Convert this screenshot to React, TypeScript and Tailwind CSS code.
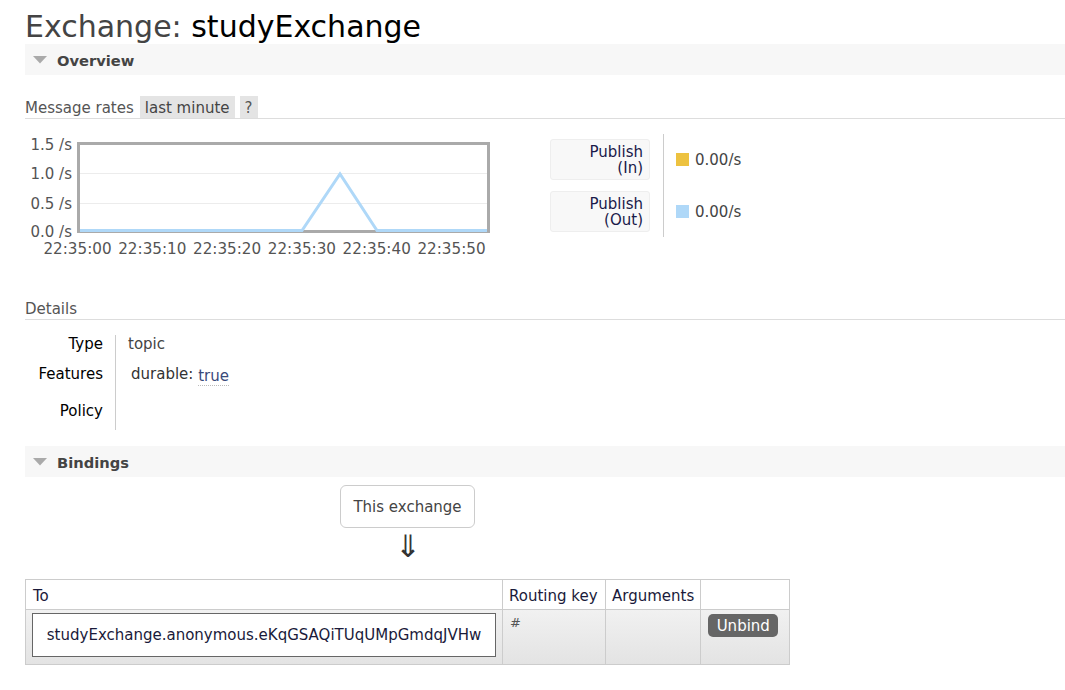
import React from "react";

const font = { fontFamily: '"DejaVu Sans", Verdana, sans-serif' };

function Tri() {
  return (
    <svg width="14" height="8" viewBox="0 0 14 8" className="shrink-0">
      <polygon points="0,0 14,0 7,7.5" fill="#aaaaaa" />
    </svg>
  );
}

function SectionBar({ title }: { title: string }) {
  return (
    <div className="h-[31px] bg-[#f7f7f7] flex items-center pl-[8px] gap-[10px]">
      <Tri />
      <span className="font-bold text-[#444] leading-[17px] text-[14.7px] pt-[2px]">{title}</span>
    </div>
  );
}

function Chart() {
  const yLabels = [
    { t: "1.5 /s", y: 14 },
    { t: "1.0 /s", y: 43 },
    { t: "0.5 /s", y: 73 },
    { t: "0.0 /s", y: 101 },
  ];
  const xLabels = ["22:35:00", "22:35:10", "22:35:20", "22:35:30", "22:35:40", "22:35:50"];
  return (
    <svg width="470" height="132" viewBox="0 0 470 132" className="shrink-0" style={font}>
      <rect x="53.5" y="13.5" width="410" height="88" fill="#ffffff" />
      <line x1="54" y1="43.5" x2="463" y2="43.5" stroke="#ececec" strokeWidth="1" />
      <line x1="54" y1="73.5" x2="463" y2="73.5" stroke="#ececec" strokeWidth="1" />
      <rect x="53.5" y="13.5" width="410" height="88" fill="none" stroke="#aaaaaa" strokeWidth="3" />
      <polyline
        points="55,100.5 277,100.5 315,44 352,100.5 462,100.5"
        fill="none"
        stroke="#afd8f8"
        strokeWidth="3"
        strokeLinejoin="miter"
      />
      {yLabels.map((l) => (
        <text key={l.t} x="47" y={l.y + 5.5} textAnchor="end" fontSize="15" fill="#545454">
          {l.t}
        </text>
      ))}
      {xLabels.map((t, i) => (
        <text key={t} x={52.5 + i * 74.8} y="123.5" textAnchor="middle" fontSize="15.2" fill="#545454">
          {t}
        </text>
      ))}
    </svg>
  );
}

function LegendBox({ a, b }: { a: string; b: string }) {
  return (
    <div className="h-[41px] w-[100px] bg-[#f8f8f8] border border-[#eeeeee] rounded-[3px] flex flex-col items-end justify-center pr-[6px] pt-[1px] text-[#1a1a4a] leading-[16px]">
      <span className="whitespace-nowrap">{a}</span>
      <span className="whitespace-nowrap">{b}</span>
    </div>
  );
}

function LegendValue({ color }: { color: string }) {
  return (
    <div className="h-[41px] flex items-center gap-[6px]">
      <span className="w-[13px] h-[13px] inline-block" style={{ backgroundColor: color }} />
      <span className="text-[#444] leading-[17px] pt-[2px]">0.00/s</span>
    </div>
  );
}

export default function App() {
  return (
    <div className="w-[1065px] h-[690px] bg-white overflow-hidden text-[15px] text-[#222]" style={font}>
      <div className="pl-[25px] pt-[9px]">
        <h1 className="text-[30px] leading-[35px] font-normal">
          <span className="text-[#444]">Exchange: </span>
          <span className="text-black">studyExchange</span>
        </h1>

        <SectionBar title="Overview" />

        <div className="mt-[21px] flex items-center h-[23px] border-b border-[#dddddd]">
          <span className="text-[#555] leading-[17px] self-center pt-[2px]">Message rates</span>
          <span className="ml-[6px] h-[22px] self-start bg-[#e4e4e4] px-[5px] pt-[2px] flex items-center text-[#444]">
            last minute
          </span>
          <span className="ml-[5px] h-[22px] self-start bg-[#e4e4e4] px-[5px] pt-[2px] flex items-center text-[#555]">
            ?
          </span>
        </div>

        <div className="flex items-start">
          <div className="mt-[11px]">
            <Chart />
          </div>
          <div className="ml-[55px] mt-[15px] flex">
            <div className="flex flex-col gap-[11px] py-[5px]">
              <LegendBox a="Publish" b="(In)" />
              <LegendBox a="Publish" b="(Out)" />
            </div>
            <div className="ml-[13px] border-l border-[#cccccc] pl-[12px] flex flex-col gap-[11px] py-[5px]">
              <LegendValue color="#edc240" />
              <LegendValue color="#afd8f8" />
            </div>
          </div>
        </div>

        <div className="mt-[39px] border-b border-[#dddddd] pb-[1px]">
          <span className="text-[#555] leading-[17px] block">Details</span>
        </div>

        <div className="mt-[15px] grid grid-cols-[90px_auto] w-fit leading-[17px]">
          <div className="text-right pr-[12px] pt-[1px] text-black h-[30px]">Type</div>
          <div className="border-l border-[#cccccc] pl-[12px] pt-[1px] h-[30px] text-[#444]">topic</div>
          <div className="text-right pr-[12px] pt-[1px] text-black h-[37px]">Features</div>
          <div className="border-l border-[#cccccc] pl-[15px] pt-[1px] h-[37px] text-[#333]">
            durable:{" "}
            <span className="relative top-[2px] text-[#3a4a7a] border-b border-dotted border-[#bbbbbb]">true</span>
          </div>
          <div className="text-right pr-[12px] pt-[1px] text-black h-[28px]">Policy</div>
          <div className="border-l border-[#cccccc] pl-[12px] h-[28px]" />
        </div>

        <div className="mt-[16px]">
          <SectionBar title="Bindings" />
        </div>

        <div className="w-[765px] flex flex-col items-center">
          <div className="mt-[8px] h-[43px] w-[135px] border border-[#cccccc] rounded-[6px] pt-[2px] flex items-center justify-center text-[#444]">
            This exchange
          </div>
          <div className="h-[51px] w-full flex justify-center pt-[1px]">
            <span className="text-[31px] leading-[34px] text-[#333] font-light">⇓</span>
          </div>
        </div>

        <table className="border-collapse border border-[#cccccc]" style={{ width: 765 }}>
          <thead>
            <tr className="h-[30px] bg-white">
              <th className="w-[477px] border border-[#cccccc] text-left font-normal px-[7px] pt-[3px] text-[#1a1a3a]">To</th>
              <th className="w-[103px] border border-[#cccccc] text-left font-normal px-[6px] pt-[3px] text-[#1a1a3a]">Routing key</th>
              <th className="w-[95px] border border-[#cccccc] text-left font-normal px-[6px] pt-[3px] text-[#1a1a3a]">Arguments</th>
              <th className="border border-[#cccccc]" />
            </tr>
          </thead>
          <tbody>
            <tr className="h-[55px] bg-gradient-to-b from-[#f1f1f1] to-[#e3e3e3]">
              <td className="border border-[#cccccc] px-[6px] py-[3px] align-top">
                <div className="h-[44px] bg-white border border-[#666666] pt-[1px] flex items-center justify-center text-[#1a1a3a]">
                  studyExchange.anonymous.eKqGSAQiTUqUMpGmdqJVHw
                </div>
              </td>
              <td className="border border-[#cccccc] px-[7px] pt-[3px] align-top text-[#555] text-[13px]">#</td>
              <td className="border border-[#cccccc] align-top" />
              <td className="border border-[#cccccc] align-top pl-[7px] pt-[4px]">
                <span className="inline-flex items-center justify-center w-[70px] h-[23px] pt-[2px] rounded-[5px] bg-[#666666] text-white">
                  Unbind
                </span>
              </td>
            </tr>
          </tbody>
        </table>
      </div>
    </div>
  );
}
